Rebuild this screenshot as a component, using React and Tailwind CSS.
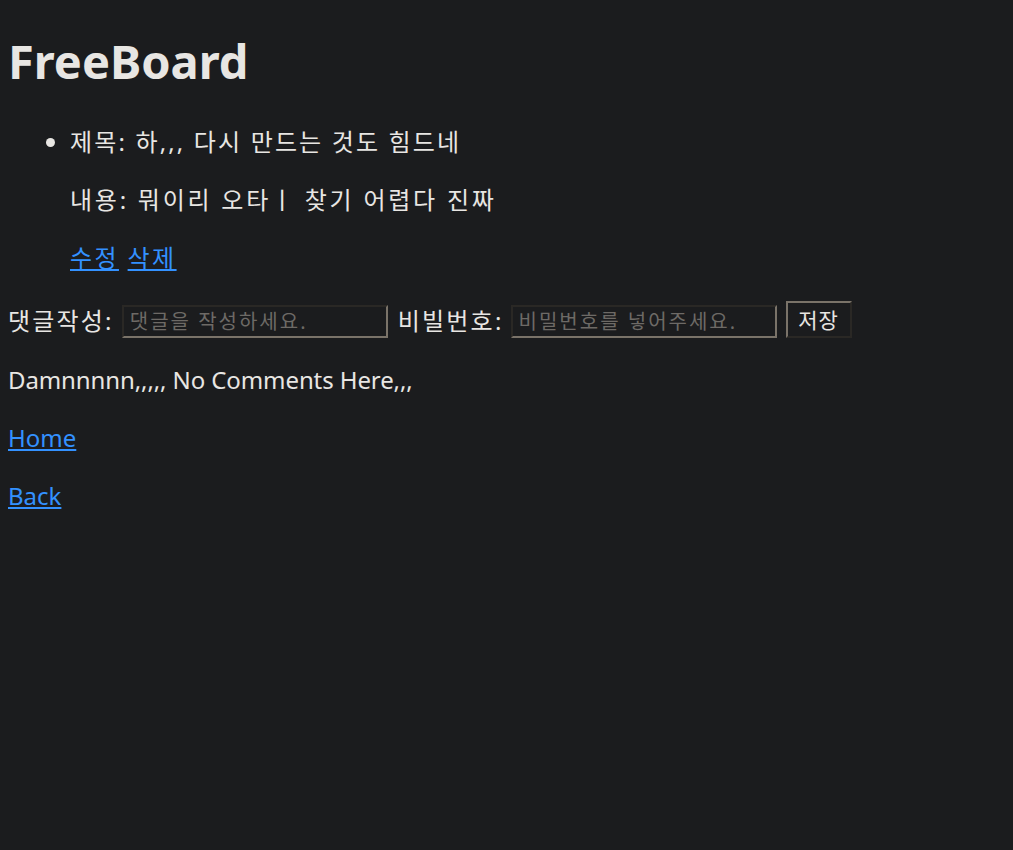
export default function App() {
  const inputCls =
    "w-[266px] h-[33px] bg-[#1b1c1e] border-2 border-t-[#2a2825] border-l-[#2a2825] border-b-[#7a7369] border-r-[#7a7369] px-[6px] text-[20px] tracking-[2px] placeholder:text-[#6d6a66] outline-none";
  return (
    <div className="min-h-[850px] bg-[#1b1c1e] text-[#e8e6e3] px-[8px] py-[8px] text-[24px] leading-[34px] [font-family:'Noto_Sans','Noto_Sans_CJK_KR',sans-serif]">
      <h1 className="text-[47px] font-bold leading-[58px] mt-[24px] mb-[35px]">FreeBoard</h1>
      <ul className="list-disc pl-[62px] mb-[26px]">
        <li>
          <p className="mb-[24px] tracking-[2.15px]">제목: 하,,, 다시 만드는 것도 힘드네</p>
          <p className="mb-[24px] tracking-[2.75px]">내용: 뭐이리 오타ㅣ 찾기 어렵다 진짜</p>
          <p className="tracking-[2.4px]">
            <a href="#" className="text-[#3391ff] underline">수정</a>{" "}
            <a href="#" className="text-[#3391ff] underline">삭제</a>
          </p>
        </li>
      </ul>
      <form className="flex items-end" onSubmit={(e) => e.preventDefault()}>
        <label className="mr-[8px] tracking-[2.2px]">댓글작성:</label>
        <input className={inputCls} placeholder="댓글을 작성하세요." />
        <label className="ml-[10px] mr-[7px] tracking-[2.2px]">비빌번호:</label>
        <input className={inputCls} placeholder="비밀번호를 넣어주세요." />
        <button className="ml-[9px] w-[66px] h-[37px] border-2 border-t-[#7a7369] border-l-[#7a7369] border-b-[#2a2825] border-r-[#2a2825] text-[21px] tracking-[1px] text-[#e8e6e3] bg-[#1b1c1e]">
          저장
        </button>
      </form>
      <p className="mt-[25px] tracking-[-0.1px]">Damnnnnn,,,,, No Comments Here,,,</p>
      <p className="mt-[24px]">
        <a href="#" className="text-[#3391ff] underline">Home</a>
      </p>
      <p className="mt-[24px]">
        <a href="#" className="text-[#3391ff] underline">Back</a>
      </p>
    </div>
  );
}
